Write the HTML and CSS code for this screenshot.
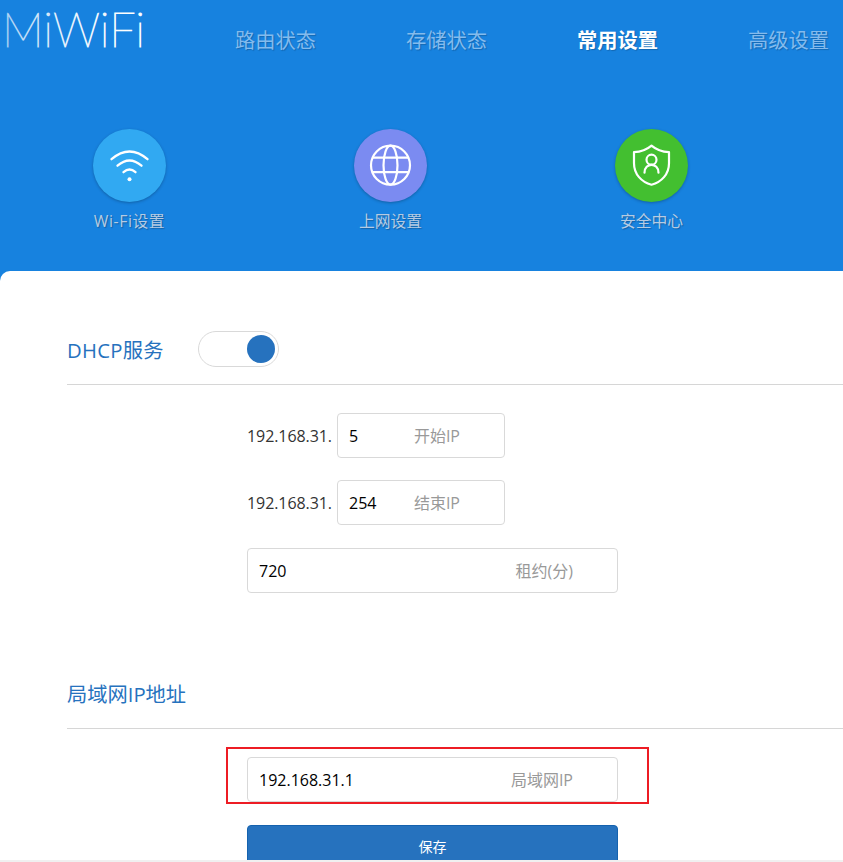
FILE: index.html
```html
<!DOCTYPE html>
<html lang="zh-CN">
<head>
<meta charset="utf-8">
<title>MiWiFi</title>
<link rel="stylesheet" href="styles.css">
</head>
<body>
<header class="header">
  <div class="topbar">
    <svg class="logo" width="150" height="60" viewBox="0 0 150 60" role="img" aria-label="MiWiFi">
      <defs>
        <linearGradient id="fade" gradientUnits="userSpaceOnUse" x1="5" y1="0" x2="130" y2="0">
          <stop offset="0" stop-color="#fff" stop-opacity=".5"/>
          <stop offset=".35" stop-color="#fff" stop-opacity=".75"/>
          <stop offset="1" stop-color="#fff"/>
        </linearGradient>
      </defs>
      <text class="logo-text" x="2" y="47" textLength="143" lengthAdjust="spacingAndGlyphs" fill="url(#fade)" stroke="url(#fade)" stroke-width="1">MiWiFi</text>
    </svg>
    <nav class="nav">
      <a class="nav-item">路由状态</a>
      <a class="nav-item">存储状态</a>
      <a class="nav-item active">常用设置</a>
      <a class="nav-item">高级设置</a>
    </nav>
  </div>
  <div class="shortcuts">
    <a class="shortcut">
      <span class="disc wifi">
        <svg width="73" height="73" viewBox="-.5 -.2 73 73" fill="none" stroke="#fff" stroke-width="2.3" stroke-linecap="round">
          <path d="M18 30Q36 14.500 54 30M24 36.500Q36 26 48 36.500M30 43Q36 37.500 42 43"/>
          <circle cx="36" cy="50" r="2" fill="#fff" stroke="none"/>
        </svg>
      </span>
      <span class="caption">Wi-Fi设置</span>
    </a>
    <a class="shortcut">
      <span class="disc net">
        <svg width="73" height="73" viewBox="-.5 -.2 73 73" fill="none" stroke="#fff" stroke-width="2.2">
          <circle cx="36" cy="36" r="19.500"/>
          <ellipse cx="36" cy="36" rx="7" ry="19.500"/>
          <path d="M18 28.500H54M18 43H54"/>
        </svg>
      </span>
      <span class="caption">上网设置</span>
    </a>
    <a class="shortcut">
      <span class="disc safe">
        <svg width="73" height="73" viewBox="-.5 -.2 73 73" fill="none" stroke="#fff" stroke-width="2.2" stroke-linecap="round" stroke-linejoin="round">
          <path d="M36 16.500Q29 22.500 18.500 23V34C18.500 45 26 53 36 55.500C46 53 53.500 45 53.500 34V23Q43 22.500 36 16.500Z"/>
          <circle cx="36" cy="30.500" r="5"/>
          <path d="M29 43.500C29 33 43 33 43 43.500"/>
        </svg>
      </span>
      <span class="caption">安全中心</span>
    </a>
  </div>
</header>
<main class="panel">
  <section>
    <div class="section-head">
      <h2 class="title dhcp">DHCP服务</h2>
      <span class="switch"><span class="knob"></span></span>
    </div>
    <div class="fields">
      <div class="row">
        <span class="prefix">192.168.31.</span>
        <div class="field short"><span class="value">5</span><span class="hint">开始IP</span></div>
      </div>
      <div class="row">
        <span class="prefix">192.168.31.</span>
        <div class="field short"><span class="value">254</span><span class="hint">结束IP</span></div>
      </div>
      <div class="field long"><span class="value">720</span><span class="hint">租约(分)</span></div>
    </div>
  </section>
  <section class="lan">
    <div class="section-head">
      <h2 class="title">局域网IP地址</h2>
    </div>
    <div class="marked">
      <div class="field long"><span class="value">192.168.31.1</span><span class="hint">局域网IP</span></div>
    </div>
    <div class="save">保存</div>
  </section>
</main>
<footer class="edge"></footer>
</body>
</html>
```
FILE: styles.css
```css
* { box-sizing: border-box; }

body {
  margin: 0;
  height: 862px;
  overflow: hidden;
  display: flex;
  flex-direction: column;
  background: #1782df;
  font-family: "Open Sans", "Noto Sans CJK SC", sans-serif;
  font-size: 16px;
}

.header { flex: none; height: 271px; overflow: hidden; }
.topbar { display: flex; height: 129px; }
.logo { flex: none; }
.logo-text { font-family: Lato, sans-serif; font-weight: 100; font-size: 47.5px; }

.nav { display: flex; gap: 90px; margin: 25px 0 0 85px; }
.nav-item {
  flex: none;
  width: 81px;
  font-size: 20.25px;
  line-height: 30px;
  font-weight: 400;
  white-space: nowrap;
  color: #84bbed;
  text-shadow: 1px 1px 1px rgba(0, 0, 0, .2);
}
.nav-item.active { color: #fff; font-weight: 700; }

.shortcuts { display: flex; gap: 161px; padding-left: 79px; }
.shortcut { width: 101px; margin-right: -1px; display: flex; flex-direction: column; align-items: center; }
.disc { width: 73px; height: 73px; border-radius: 50%; box-shadow: 0 1px 3px rgba(0, 0, 0, .25); }
.disc svg { display: block; }
.wifi { background: #31a9f2; }
.net { background: #7b8bf1; }
.safe { background: #43bf30; }
.caption {
  margin-top: 7px;
  line-height: 24px;
  font-size: 15.75px;
  font-weight: 400;
  white-space: nowrap;
  color: #b5cbe3;
  text-shadow: 1px 1px 1px rgba(0, 0, 0, .25);
}
.wifi + .caption { letter-spacing: .6px; }

.panel {
  flex: none;
  height: 589px;
  overflow: hidden;
  padding: 53px 0 0 67px;
  background: #fff;
  border-top-left-radius: 10px;
}
.section-head {
  display: flex;
  align-items: center;
  height: 61px;
  padding-bottom: 10px;
  border-bottom: 1px solid #d6d6d6;
}
.title {
  width: 131px;
  margin: 1px 0 0;
  font-size: 20.25px;
  line-height: 30px;
  font-weight: 400;
  white-space: nowrap;
  color: #2672be;
}
.title.dhcp { letter-spacing: .3px; }
.switch {
  display: flex;
  align-items: center;
  justify-content: flex-end;
  width: 81px;
  height: 36px;
  margin-top: -1px;
  padding-right: 3px;
  border: 1px solid #d9d9d9;
  border-radius: 18px;
}
.knob { width: 28px; height: 28px; border-radius: 50%; background: #2672be; }

.fields { margin: 28px 0 0 180px; }
.row { display: flex; align-items: center; height: 45px; margin-bottom: 22px; }
.row:nth-child(2) { margin-bottom: 23px; }
.prefix { width: 90px; color: #333; letter-spacing: -.08px; }
.field {
  display: flex;
  align-items: center;
  justify-content: space-between;
  height: 45px;
  padding: 0 44px 0 11px;
  border: 1px solid #d9d9d9;
  border-radius: 4px;
}
.short { width: 168px; }
.long { width: 371px; }
.value { color: #000; }
.hint { margin-bottom: 2px; color: #999; font-weight: 400; font-size: 16px; white-space: nowrap; }

.lan { margin-top: 75px; }
.marked {
  width: 423px;
  height: 57px;
  margin: 18px 0 0 159px;
  padding: 8px 0 0 19px;
  border: 2px solid #ed1c24;
}
.save {
  width: 371px;
  height: 45px;
  margin: 21px 0 0 180px;
  border: 1px solid #1562ae;
  border-radius: 4px;
  background: #2672be;
  color: #fff;
  font-size: 14px;
  line-height: 41px;
  text-align: center;
}
.edge { flex: none; height: 2px; background: #f0f0f0; }
```
